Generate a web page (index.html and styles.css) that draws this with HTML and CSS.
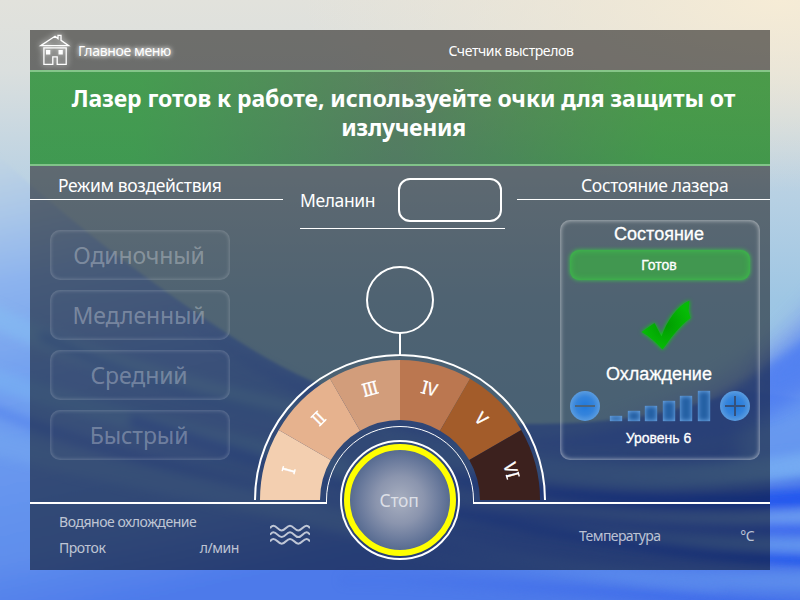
FILE: index.html
```html
<!DOCTYPE html>
<html lang="ru">
<head>
<meta charset="utf-8">
<title>Лазер</title>
<link rel="stylesheet" href="styles.css">
</head>
<body>
<svg class="wallpaper" viewBox="0 0 800 600" preserveAspectRatio="none" aria-hidden="true">
  <defs>
    <linearGradient id="sky" x1="0" y1="0" x2="0" y2="1">
      <stop offset="0" stop-color="#e2e2dc"/>
      <stop offset=".12" stop-color="#dadfde"/>
      <stop offset=".3" stop-color="#bbd2e3"/>
      <stop offset=".5" stop-color="#9ec6e4"/>
      <stop offset=".7" stop-color="#92c2e8"/>
    </linearGradient>
    <radialGradient id="sun" gradientUnits="userSpaceOnUse" cx="780" cy="0" r="480" gradientTransform="scale(1 .4)">
      <stop offset="0" stop-color="#f6ecd6"/>
      <stop offset="1" stop-color="#f0e6d2" stop-opacity="0"/>
    </radialGradient>
    <linearGradient id="wave" gradientUnits="userSpaceOnUse" x1="0" y1="150" x2="100" y2="610">
      <stop offset="0" stop-color="#c3d6e2"/>
      <stop offset=".14" stop-color="#a9c6e8"/>
      <stop offset=".28" stop-color="#8cb3ee"/>
      <stop offset=".5" stop-color="#709ff0"/>
      <stop offset=".85" stop-color="#5f8eec"/>
      <stop offset="1" stop-color="#4d7aea"/>
    </linearGradient>
    <linearGradient id="deep" x1="0" y1="0" x2="1" y2="0">
      <stop offset="0" stop-color="#5c88ec" stop-opacity="0"/>
      <stop offset=".3" stop-color="#5683ee" stop-opacity=".7"/>
      <stop offset="1" stop-color="#4f7cf0" stop-opacity=".8"/>
    </linearGradient>
    <linearGradient id="fade" gradientUnits="userSpaceOnUse" x1="400" y1="0" x2="800" y2="0">
      <stop offset="0" stop-color="#fff" stop-opacity=".15"/>
      <stop offset=".5" stop-color="#fff" stop-opacity=".55"/>
      <stop offset="1" stop-color="#fff"/>
    </linearGradient>
    <mask id="east"><rect x="0" y="300" width="400" height="300" fill="#fff" opacity=".15"/><rect x="400" y="300" width="400" height="300" fill="url(#fade)"/></mask>
    <filter id="b1" filterUnits="userSpaceOnUse" x="-50" y="0" width="900" height="700"><feGaussianBlur stdDeviation="1.5"/></filter>
    <filter id="b4" filterUnits="userSpaceOnUse" x="-50" y="0" width="900" height="700"><feGaussianBlur stdDeviation="5"/></filter>
    <filter id="b9" filterUnits="userSpaceOnUse" x="-50" y="0" width="900" height="700"><feGaussianBlur stdDeviation="10"/></filter>
  </defs>
  <rect width="800" height="600" fill="url(#sky)"/>
  <rect width="800" height="600" fill="url(#sun)"/>
  <path filter="url(#b9)" fill="#86a8ea" opacity=".8" d="M830 280C790 325 765 348 740 366S660 412 600 425L830 460Z"/>
  <path filter="url(#b1)" fill="url(#wave)" d="M-10 148C60 214 150 284 240 342S420 424 530 424S700 405 740 390L810 400V610H-10Z"/>
  <path filter="url(#b4)" fill="url(#deep)" d="M160 300C210 330 300 395 420 424S580 434 640 422S740 388 820 330V410C720 450 600 450 500 445S260 400 160 300Z"/>
  <g fill="none" filter="url(#b4)">
    <path stroke="#86c0f4" stroke-width="22" opacity=".5" d="M-30 305C60 350 160 385 350 425"/>
    <path stroke="#7ab6f4" stroke-width="20" opacity=".5" d="M-30 370C80 410 180 432 350 470"/>
    <path stroke="#5080ec" stroke-width="9" opacity=".5" d="M40 335C140 385 220 405 350 430"/>
    <path stroke="#5482ec" stroke-width="10" opacity=".7" d="M-30 400C60 440 180 470 300 500S500 560 720 590"/>
    <path stroke="#76a8f0" stroke-width="24" opacity=".5" d="M-30 435C80 470 200 485 380 530"/>
    <path stroke="#4a78ee" stroke-width="12" opacity=".6" d="M130 420C260 460 380 500 500 520S700 550 850 560"/>
  </g>
  <g fill="none" mask="url(#east)">
    <g filter="url(#b4)">
      <path stroke="#74acf2" stroke-width="24" d="M380 440C560 484 700 486 850 456"/>
      <path stroke="#3a68ee" stroke-width="10" d="M380 505C560 515 660 528 850 530"/>
      <path stroke="#2456ee" stroke-width="17" d="M380 466C600 508 720 508 850 494"/>
      <path stroke="#6c9cf0" stroke-width="12" d="M380 488C600 520 720 522 850 515"/>
      <path stroke="#6496ee" stroke-width="12" d="M380 510C600 535 700 548 850 545"/>
      <path stroke="#2456ea" stroke-width="10" d="M380 500C650 552 740 560 850 562"/>
      <path stroke="#5b8cec" stroke-width="18" d="M380 550C620 578 720 584 850 580"/>
      <path stroke="#3a68ea" stroke-width="10" d="M340 580C560 582 700 604 850 610"/>
    </g>
  </g>
  <path filter="url(#b9)" fill="#74a8f2" opacity=".6" d="M830 380L740 430V470L830 465Z"/>
  <path filter="url(#b9)" fill="#5080f2" opacity=".7" d="M830 310L760 370V410L830 370Z"/>
</svg>

<main class="panel">
  <header class="topbar">
    <svg class="house" viewBox="0 0 36 36" aria-hidden="true">
      <path d="M2.800 12.600 17 3.200 20 5.600V2.400h3v4.900l7.600 5.300Z"/>
      <path d="M5.900 14.800h22.300v16.600h-9V23.800h-4.400v7.600H5.900Z"/>
      <path class="solid" d="M8 17h4.300v4.500H8ZM20.500 17h4.300v4.500H20.500Z"/>
    </svg>
    <span class="menu">Главное меню</span>
    <span class="counter">Счетчик выстрелов</span>
  </header>

  <section class="alert">
    <div class="alert-line one">Лазер готов к работе, используейте очки для защиты от</div>
    <div class="alert-line two">излучения</div>
  </section>

  <div class="stage">
    <section class="modes">
      <h2 class="title title-modes">Режим воздействия</h2>
      <div class="mode-list">
        <div class="mode">Одиночный</div>
        <div class="mode">Медленный</div>
        <div class="mode">Средний</div>
        <div class="mode">Быстрый</div>
      </div>
    </section>

    <section class="melanin">
      <span class="melanin-label">Меланин</span>
      <div class="melanin-value"></div>
    </section>

    <section class="laser">
      <h2 class="title title-laser">Состояние лазера</h2>
      <div class="status">
        <div class="status-head">Состояние</div>
        <div class="badge">Готов</div>
        <svg class="check" viewBox="0 0 60 60" aria-hidden="true">
          <defs><radialGradient id="ck"><stop offset="0" stop-color="#009c00"/><stop offset="1" stop-color="#06bb06"/></radialGradient></defs>
          <path fill="url(#ck)" d="M5.500 32 18.500 23 25.500 36.500C31 21 41 6 53.500.5L52.500 11 54.500 18C43 26 35 38 26.500 49.500 20 42 13 36 5.500 32Z"/>
        </svg>
        <div class="cool-head">Охлаждение</div>
        <div class="cool">
          <svg class="round minus" viewBox="0 0 30 30">
            <defs><radialGradient id="btn"><stop offset="0" stop-color="#2079dc"/><stop offset=".6" stop-color="#3584dc"/><stop offset="1" stop-color="#5a9ce0"/></radialGradient></defs>
            <circle cx="15" cy="15" r="15" fill="url(#btn)"/><path d="M5 15h20"/>
          </svg>
          <div class="bars">
            <i style="height:5px"></i><i style="height:10px"></i><i style="height:15px"></i><i style="height:20px"></i><i style="height:25px"></i><i style="height:30px"></i>
          </div>
          <svg class="round plus" viewBox="0 0 30 30"><circle cx="15" cy="15" r="15" fill="url(#btn)"/><path d="M5 15h20M15 5v20"/></svg>
        </div>
        <div class="level">Уровень 6</div>
      </div>
    </section>

    <footer class="footer">
      <div class="water">
        <span class="w-title">Водяное охлождение</span>
        <div class="flow"><span class="w-flow">Проток</span><span class="w-unit">л/мин</span></div>
      </div>
      <svg class="waves" viewBox="0 0 40 22" aria-hidden="true">
        <path id="wv" d="M0 4.200C1.200 2.400 2.200 1.700 3.400 1.700 7 1.700 8 6.500 11.700 6.500S16.500 1.700 20 1.700 24.800 6.500 28.300 6.500 33.200 1.700 36.600 1.700C37.800 1.700 38.800 2.400 40 4.200"/>
        <use href="#wv" y="6.600"/><use href="#wv" y="13.200"/>
      </svg>
      <div class="temp"><span class="t-name">Температура</span><span class="t-unit">°C</span></div>
    </footer>

    <svg class="dial" viewBox="30 260 740 310">
      <defs>
        <radialGradient id="stop" cx=".5" cy=".5" r=".5">
          <stop offset="0" stop-color="#a8afc0"/>
          <stop offset=".45" stop-color="#8b95ae"/>
          <stop offset=".8" stop-color="#66779a"/>
          <stop offset="1" stop-color="#51678c"/>
        </radialGradient>
      </defs>
      <circle class="line2" cx="400" cy="300" r="33"/>
      <path class="line2" d="M400 333V355M255 500A145 145 0 0 1 545 500"/>
      <path fill="#f3cfb0" d="M260 500A140 140 0 0 1 278.760 430L330.720 460A80 80 0 0 0 320 500Z"/>
      <path fill="#e6b28e" d="M278.760 430A140 140 0 0 1 330 378.760L360 430.720A80 80 0 0 0 330.720 460Z"/>
      <path fill="#d29d7b" d="M330 378.760A140 140 0 0 1 400 360V420A80 80 0 0 0 360 430.720Z"/>
      <path fill="#bb7750" d="M400 360A140 140 0 0 1 470 378.760L440 430.720A80 80 0 0 0 400 420Z"/>
      <path fill="#a35c2a" d="M470 378.760A140 140 0 0 1 521.240 430L469.280 460A80 80 0 0 0 440 430.720Z"/>
      <path fill="#3c211e" d="M521.240 430A140 140 0 0 1 540 500H480A80 80 0 0 0 469.280 460Z"/>
      <g class="numerals">
        <g transform="translate(400 500) rotate(-75)"><text y="-109">Ⅰ</text><path d="M-2.600-121.300h5.200M-2.600-109.200h5.200"/></g>
        <g transform="translate(400 500) rotate(-45)"><text y="-109">Ⅱ</text><path d="M-5-121.300h10M-5-109.200h10"/></g>
        <g transform="translate(400 500) rotate(-15)"><text y="-109">Ⅲ</text><path d="M-7.500-121.300h15M-7.500-109.200h15"/></g>
        <g transform="translate(400 500) rotate(15)"><text y="-109">Ⅳ</text><path d="M-8.200-121.300h5M-8.200-109.200h5"/></g>
        <g transform="translate(400 500) rotate(45)"><text y="-109">Ⅴ</text></g>
        <g transform="translate(400 500) rotate(75)"><text y="-109">Ⅵ</text><path d="M3.200-121.300h5M3.200-109.200h5"/></g>
      </g>
      <path class="line1" d="M326.500 503V500A73.500 73.500 0 0 1 473.500 500V503"/>
      <path class="line2" d="M30 503H327M473 503H770"/>
      <circle class="line2" cx="400" cy="500" r="59"/>
      <circle cx="400" cy="500" r="53" fill="url(#stop)" stroke="#ff0" stroke-width="6"/>
      <text class="stop-text" x="399" y="507">Стоп</text>
    </svg>
  </div>
</main>
</body>
</html>
```
FILE: styles.css
```css
* { box-sizing: border-box; }
body {
  margin: 0;
  width: 800px;
  height: 600px;
  overflow: hidden;
  position: relative;
  color: #fff;
  font-family: "Noto Sans", "Open Sans", sans-serif;
}
.wallpaper { position: absolute; inset: 0; width: 800px; height: 600px; }
.panel {
  position: relative;
  width: 740px;
  height: 540px;
  margin: 30px;
  background: rgba(0, 0, 0, .5);
  display: flex;
  flex-direction: column;
  white-space: nowrap;
}
.topbar {
  height: 40px;
  display: grid;
  grid-template-columns: 48px 222px 1fr;
  align-items: center;
  font-size: 14px;
  background: rgba(108, 104, 100, .25);
}
.house {
  width: 36px;
  height: 36px;
  margin: 2px 0 0 8px;
  fill: none;
  stroke: #fff;
  stroke-width: 1.3;
  filter: drop-shadow(0 0 3px #fff);
}
.house .solid { fill: #fff; stroke: none; }
.menu { letter-spacing: -.35px; text-shadow: 0 0 4px #fff, 0 0 6px rgba(255, 255, 255, .6); }
.counter { justify-self: center; margin-right: 48px; letter-spacing: -.4px; }
.alert {
  height: 96px;
  border-top: 2px solid rgba(140, 225, 145, .75);
  border-bottom: 2px solid rgba(140, 225, 145, .75);
  background: linear-gradient(96deg, rgba(32, 200, 50, .5) 15%, rgba(40, 175, 55, .26) 50%, rgba(34, 195, 40, .5) 85%);
  background-clip: padding-box;
  padding-top: 12px;
  font-size: 23px;
  font-weight: 700;
  line-height: 29px;
  text-align: center;
}
.alert-line { padding-left: 7px; letter-spacing: -.3px; }
.alert-line.one { letter-spacing: -.1px; }
.stage {
  position: relative;
  flex: 1;
  display: grid;
  grid-template-columns: 253px 234px 253px;
  grid-template-rows: 338px 66px;
}
.title {
  margin: 0;
  height: 34px;
  border-bottom: 1px solid #fff;
  font-size: 17.5px;
  font-weight: 400;
  line-height: 39px;
  letter-spacing: -.35px;
}
.title-modes { padding-left: 28px; }
.title-laser { padding-left: 64px; }
.mode-list { padding: 30px 0 0 20px; display: flex; flex-direction: column; gap: 10px; }
.mode {
  width: 180px;
  height: 50px;
  padding: 0 2px 0 0;
  border-radius: 10px;
  display: flex;
  align-items: center;
  justify-content: center;
  font-size: 23px;
  letter-spacing: -.1px;
  color: rgba(255, 255, 255, .3);
  box-shadow: inset 0 0 4px rgba(255, 255, 255, .3);
  background: rgba(255, 255, 255, .015);
}
.melanin {
  margin: 12px 12px 0 17px;
  height: 51px;
  border-bottom: 1px solid #fff;
  display: flex;
  justify-content: space-between;
  padding-right: 3px;
  font-size: 17.5px;
  line-height: 45px;
  letter-spacing: -.4px;
}
.melanin-value { width: 104px; height: 44px; border: 2px solid #fff; border-radius: 12px; }
.status {
  width: 200px;
  height: 240px;
  margin: 20px 0 0 43px;
  border-radius: 10px;
  box-shadow: inset 0 0 5px rgba(255, 255, 255, .7);
  font-family: "Liberation Sans", sans-serif;
  display: flex;
  flex-direction: column;
  align-items: center;
  -webkit-text-stroke: .3px #fff;
}
.status-head { font-size: 18px; line-height: 28px; padding-right: 2px; }
.badge {
  width: 180px;
  height: 30px;
  margin-top: 2px;
  border-radius: 9px;
  background: #419750;
  box-shadow: inset 0 0 6px #3bc648, 0 0 4px #3bc648;
  font-size: 14px;
  line-height: 30px;
  text-align: center;
  padding-right: 2px;
}
.check { width: 60px; height: 60px; margin: 20px 0 0 11px; filter: drop-shadow(0 0 2px #0d0); }
.cool-head { font-size: 18px; line-height: 26px; margin-top: 1px; padding-right: 2px; }
.cool { width: 180px; display: flex; align-items: flex-end; justify-content: space-between; margin-top: 4px; }
.round { width: 30px; height: 30px; }
.round path { stroke: #35517c; stroke-width: 2; }
.minus path { stroke: #4a6580; }
.bars { width: 100px; height: 30px; display: flex; align-items: flex-end; justify-content: space-between; }
.bars i { width: 12px; background: #2560a4; box-shadow: inset 0 0 5px #78b0ec, 0 0 1px #5a98dc; }
.level { font-size: 14px; line-height: 16px; margin-top: 9px; padding-right: 3px; }
.footer {
  grid-column: 1 / 4;
  display: grid;
  grid-template-columns: 240px 309px 1fr;
  color: rgba(255, 255, 255, .7);
  font-size: 14px;
  line-height: 26px;
}
.water { padding: 5px 31px 0 29px; display: flex; flex-direction: column; letter-spacing: -.45px; }
.flow { display: flex; justify-content: space-between; }
.waves { width: 40px; height: 22px; margin-top: 20px; fill: none; stroke: rgba(255, 255, 255, .7); stroke-width: 2; }
.temp { display: flex; justify-content: space-between; padding: 19px 16px 0 0; letter-spacing: -.6px; }
.dial { position: absolute; left: 0; bottom: 0; width: 740px; height: 310px; pointer-events: none; }
.line1 { fill: none; stroke: #fff; stroke-width: 1; }
.line2 { fill: none; stroke: #fff; stroke-width: 2; }
.numerals { fill: #fff; stroke: #fff; font: 17px "Noto Sans CJK JP", sans-serif; text-anchor: middle; }
.numerals text { stroke-width: .3; }
.numerals path { stroke-width: 1.4; }
.stop-text { fill: #dcdfe6; font-size: 17.5px; letter-spacing: -.3px; text-anchor: middle; }
```
